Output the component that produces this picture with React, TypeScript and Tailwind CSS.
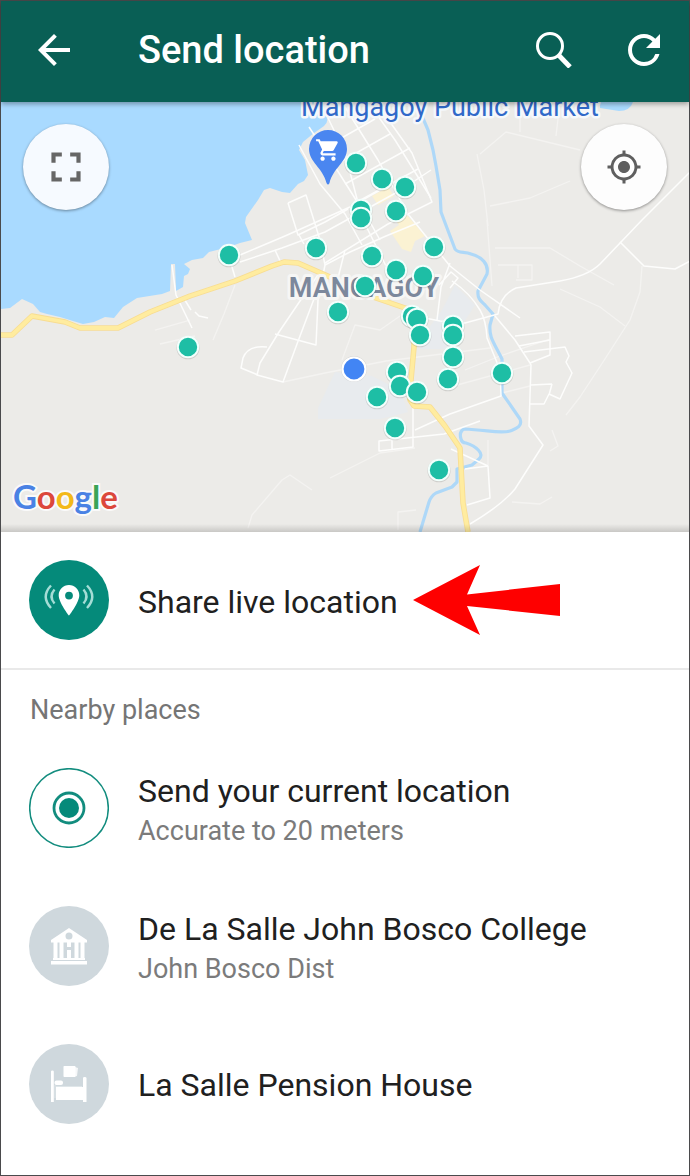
import React from 'react';
import {
  MdArrowBack,
  MdFullscreen,
  MdGpsFixed,
  MdRefresh,
  MdShoppingCart,
} from 'react-icons/md';

interface Place {
  title: string;
  subtitle?: string;
  icon: React.ReactNode;
}

interface PlaceRowProps {
  place: Place;
}

const PLACE_DOTS: [number, number][] = [
  [356, 163],
  [382, 179],
  [405, 187],
  [361, 210],
  [361, 218],
  [396, 211],
  [434, 247],
  [316, 248],
  [229, 255],
  [372, 256],
  [396, 270],
  [423, 276],
  [365, 286],
  [338, 312],
  [412, 316],
  [417, 319],
  [420, 335],
  [453, 326],
  [453, 335],
  [453, 357],
  [448, 379],
  [502, 373],
  [188, 347],
  [397, 372],
  [400, 386],
  [417, 392],
  [377, 397],
  [395, 428],
  [439, 470],
];

const WATER =
  'M0 102H318L325 114Q330 121 324 126Q312 134 303 142L299 150L305 160L308 175L304 181L298 184L290 193L282 192L270 188L264 190L258 200L246 217L245 223L252 240L240 243L229 247L209 252L203 258L192 260L184 264L190 269L188 274L184 276L183 287L176 291L175 264L171 264L170 291L162 294L137 298L123 307L114 318L105 317L94 322L83 324L73 321L60 317L47 314L40 312L33 304L22 299L10 308L0 309Z';

const MAIN_ROAD =
  'M0 335H12L32 316L65 322L80 328H118L150 312L190 296L235 281L272 266L284 262L298 263L330 277L373 297L408 309L414 325L414 347L411 380L410 400L414 406L430 407L445 426L460 448L463 503L468 532';

const RIVER =
  'M424 102L422 116L428 130L433 150L436 166L440 190L441 212L447 228L455 249C458 254 465 251 471 254C482 257 489 264 487 274L478 291C477 299 482 302 485 305L493 314L490 325C489 337 493 341 502 359V393L520 419C523 427 515 429 510 431C500 434 488 430 464 429C458 432 460 443 466 443C476 446 485 454 479 459L472 465L457 469V482L452 487L436 493Q431 496 429 502L420 532';

const ROADS = [
  'M690 172L642 220L600 264Q588 276 560 281L516 288Q500 295 498 314L465 323L440 321L415 316',
  'M620 242L644 266L675 269L690 261',
  'M452 281Q470 293 480 310Q486 320 487 338L500 370L501 396L450 414L415 430',
  'M495 316L515 340L530 363L531 365L529 426L543 445L515 489Q502 505 470 524',
  'M515 336L550 332V355L530 363M519 346L550 340M524 352L565 347L569 356L566 362L572 373L560 399L549 394L544 404L530 404M552 384L549 395M531 385L552 384',
  'M465 469L488 466L490 498L467 505M451 449L488 466',
  'M328 118L345 153L362 218L388 270M299 145L320 184L345 214L362 245',
  'M309 127L332 162L370 222L380 240M345 107L378 160L408 214L450 266L480 290L520 318',
  'M368 102L395 140L431 198',
  'M390 122L412 153L432 202L388 224L325 263',
  'M240 255L285 236L350 207L405 176M240 262L282 248L325 232L401 190L431 170',
  'M288 203L306 195L316 227L320 240L325 265L318 300L316 345L275 334',
  'M288 203L298 235L325 222L348 209M275 250L281 263M299 235L304 244',
  'M324 148L375 119M333 166L390 134M345 184L410 148M357 202L418 169',
  'M320 272L300 301L279 332L260 363L257 375L283 382L297 344L320 283',
  'M267 347Q248 345 243 358L241 368L258 375',
  'M345 250L338 278M325 265L350 252L386 236L420 222',
  'M450 263L441 287L437 320M439 285L451 272L458 278L450 288',
  'M172 265L176 295L192 328M183 297L191 310M195 312L199 316L208 318',
  'M229 257L235 277',
  'M413 406V447L379 451V441L444 434L480 421M392 440V450',
];

const MINOR_ROADS = [
  'M480 154L506 132L580 150M477 154L484 190L488 226M490 206L530 198L570 181',
  'M487 220L492 286M495 248H550L580 266L614 285M498 265H532V280H516M518 265V278',
  'M560 289L600 307L625 326M642 266L640 292L630 320L603 362L580 397L566 415',
  'M283 382L325 373L386 361L490 348M342 360L355 325L380 330L400 316',
  'M465 370L500 356L550 339M450 387L530 365M502 393L530 386',
  'M415 448L380 453L352 467L330 478M312 490L290 475L282 480L252 515L248 528',
  'M552 430L558 446L550 451M488 440V465M398 530V512L416 510',
  'M155 330L190 320M160 344L195 336M213 340L224 314L235 285',
  'M520 102V132M560 102L556 136',
  'M512 502L540 504L552 497',
];

const PLACES: Place[] = [
  {
    title: 'Send your current location',
    subtitle: 'Accurate to 20 meters',
    icon: <CurrentLocationIcon />,
  },
  {
    title: 'De La Salle John Bosco College',
    subtitle: 'John Bosco Dist',
    icon: <CollegeIcon />,
  },
  {
    title: 'La Salle Pension House',
    icon: <BedIcon />,
  },
];

function SearchIcon() {
  return (
    <svg
      className="size-9"
      viewBox="0 0 36 36"
      fill="none"
      stroke="currentColor"
      aria-hidden="true"
    >
      <circle cx="14" cy="14" r="12.5" strokeWidth="3" />
      <path d="M23 23.5L34 35" strokeWidth="4.8" />
    </svg>
  );
}

function LiveLocationIcon() {
  return (
    <svg className="size-20 shrink-0" viewBox="0 0 80 80" aria-hidden="true">
      <circle cx="40" cy="40" r="40" fill="#058a7a" />
      <path
        fill="#fff"
        fillRule="evenodd"
        d="M40 25C34.3 25 29.7 29.5 29.7 35.2C29.7 42.5 40 55.6 40 55.6S50.3 42.5 50.3 35.2C50.3 29.5 45.7 25 40 25ZM40 31.7A3.9 3.9 0 1 1 40 39.5A3.9 3.9 0 0 1 40 31.7Z"
      />
      <g fill="none" stroke="#a5ddd6" strokeWidth="2.4">
        <path d="M25.5 29.5Q19.5 36.5 25.5 43.5M22 25.5Q11.5 36.5 22 48" />
        <path d="M54.5 29.5Q60.5 36.5 54.5 43.5M58 25.5Q68.5 36.5 58 48" />
      </g>
    </svg>
  );
}

function CurrentLocationIcon() {
  return (
    <svg
      className="size-20 shrink-0"
      viewBox="0 0 80 80"
      fill="none"
      stroke="#128c7e"
      aria-hidden="true"
    >
      <circle cx="40" cy="40" r="39.3" strokeWidth="1.5" />
      <circle cx="40" cy="40" r="15" strokeWidth="2.8" />
      <circle cx="40" cy="40" r="10" fill="#058a7a" stroke="none" />
    </svg>
  );
}

function CollegeIcon() {
  return (
    <svg className="size-20 shrink-0" viewBox="0 0 80 80" aria-hidden="true">
      <circle cx="40" cy="40" r="40" fill="#cfd8dd" />
      <g fill="#fff">
        <path
          fillRule="evenodd"
          d="M40 22L58 34V36.5H22V34ZM40 26.5A3.5 3.5 0 1 0 40 33.5A3.5 3.5 0 1 0 40 26.5Z"
        />
        <path d="M24.5 36H28.5V53H24.5ZM30.5 36H34.5V53H30.5ZM45.5 36H49.5V53H45.5ZM51.5 36H55.5V53H51.5Z" />
        <path d="M38 36H42V41H38ZM38 44H42V53H38ZM24 52H56V54H24ZM22 55H58V58.5H22Z" />
      </g>
    </svg>
  );
}

function BedIcon() {
  return (
    <svg className="size-20 shrink-0" viewBox="0 0 80 80" aria-hidden="true">
      <circle cx="40" cy="40" r="40" fill="#cfd8dd" />
      <g fill="#fff">
        <path d="M22 27.5Q22 26.5 23.4 26.5T24.8 27.5V56H27V43H54V34Q54 33 55.7 33T57.5 34V58H54V56H24.8V58H22Z" />
        <rect x="25.5" y="36.5" width="8.5" height="4.5" rx="2" />
        <rect x="34.5" y="22" width="12" height="11" rx="0.8" />
        <path d="M46 23L49 24L48 32L44 33Z" opacity="0.8" />
      </g>
      <path d="M27 42.5H53M26 41V54" stroke="#dfe6e9" strokeWidth="1" />
    </svg>
  );
}

function MapCanvas() {
  return (
    <svg
      className="block size-full"
      viewBox="1 102 688 430"
      preserveAspectRatio="xMidYMid slice"
      role="img"
      aria-label="Map of Mangagoy"
    >
      <rect x="0" y="102" width="690" height="430" fill="#ecebe8" />
      <path d="M600 102H633Q630 111 619 111L600 108Z" fill="#a9daff" />
      <path
        d="M335 372L318 408V419H380L408 412L400 390L372 376ZM455 285L442 310L420 340V349H447L475 305Z"
        fill="#e8ebee"
      />
      <path
        d="M372 196L388 187L394 196L378 205ZM390 231L399 225L396 221L407 215L425 236L415 241L411 252L402 249Z"
        fill="#fbf2d3"
      />
      <path d={WATER} fill="#a9daff" />

      <g fill="none" strokeLinejoin="round">
        <g stroke="#f4f3f1" strokeWidth="1.3">
          {MINOR_ROADS.map((d) => (
            <path key={d} d={d} />
          ))}
        </g>
        <path d={RIVER} stroke="#aed8f8" strokeWidth="3.2" />
        <g stroke="#fdfdfc" strokeWidth="1.5">
          {ROADS.map((d) => (
            <path key={d} d={d} />
          ))}
        </g>
        <path d={MAIN_ROAD} stroke="#f8dd92" strokeWidth="5.5" />
        <path d={MAIN_ROAD} stroke="#ffec9f" strokeWidth="3.8" />
      </g>

      <g
        fontFamily="Roboto, sans-serif"
        textAnchor="middle"
        paintOrder="stroke"
        strokeLinejoin="round"
      >
        <text
          x="450"
          y="116"
          fontSize="27"
          fill="#3069c9"
          stroke="#f5f8fb"
          strokeWidth="5"
        >
          Mangagoy Public Market
        </text>
        <text
          x="364"
          y="297"
          fontSize="27"
          fontWeight="600"
          fill="#7c889c"
          stroke="#f6f6f5"
          strokeWidth="6"
        >
          MANGAGOY
        </text>
      </g>

      <path
        d="M328 130A19 19 0 0 1 347 149C347 162 333 168 329.5 183Q328 186 326.5 183C323 168 309 162 309 149A19 19 0 0 1 328 130Z"
        fill="#4a86f0"
      />
      <MdShoppingCart x="315" y="137" size={26} color="#fff" />

      {PLACE_DOTS.map(([x, y]) => (
        <g key={`${x}-${y}`}>
          <circle cx={x} cy={y + 0.7} r="11.6" fill="#000" opacity="0.12" />
          <circle
            cx={x}
            cy={y}
            r="10.2"
            fill="#1ebea5"
            stroke="#f2fffc"
            strokeWidth="2"
          />
        </g>
      ))}
      <circle cx="354" cy="369" r="13" fill="#000" opacity="0.1" />
      <circle
        cx="354"
        cy="369"
        r="11.5"
        fill="#4285f4"
        stroke="#fff"
        strokeWidth="2.2"
      />
    </svg>
  );
}

function GoogleLogo() {
  return (
    <div className="absolute bottom-4 left-3 font-['Lato',sans-serif] text-[33px] leading-10 font-bold [paint-order:stroke] [-webkit-text-stroke:4px_#fafafa]">
      <span className="text-[#4a82e4]">G</span>
      <span className="text-[#dc483c]">o</span>
      <span className="text-[#f3b91a]">o</span>
      <span className="text-[#4a82e4]">g</span>
      <span className="text-[#3aa456]">l</span>
      <span className="text-[#dc483c]">e</span>
    </div>
  );
}

function PlaceRow({ place }: Readonly<PlaceRowProps>) {
  return (
    <li>
      <button
        type="button"
        className="flex w-full items-center gap-[29px] px-7 py-[29px] text-left"
      >
        {place.icon}
        <span className="flex min-w-0 flex-col gap-1 pt-0.5">
          <span className="text-[32px] leading-10 text-[#202020]">
            {place.title}
          </span>
          {place.subtitle && (
            <span className="text-[27px] leading-8 text-[#7b7b7b]">
              {place.subtitle}
            </span>
          )}
        </span>
      </button>
    </li>
  );
}

export default function App() {
  return (
    <div className="flex min-h-screen flex-col border border-[#4a4a4c] bg-white font-['Roboto',sans-serif]">
      <header className="relative z-10 flex h-[101px] items-center bg-[#095f55] pr-[21px] pb-1 pl-[29px] text-white shadow-[0_2px_5px_rgba(0,0,0,0.35)]">
        <button type="button" aria-label="Back">
          <MdArrowBack className="size-12" />
        </button>
        <h1 className="ml-[60px] flex-1 text-[38px] leading-10 font-medium">
          Send location
        </h1>
        <button type="button" aria-label="Search" className="mr-12">
          <SearchIcon />
        </button>
        <button type="button" aria-label="Refresh">
          <MdRefresh className="size-12" />
        </button>
      </header>

      <main>
        <section className="relative h-[430px] overflow-hidden">
          <MapCanvas />
          <button
            type="button"
            aria-label="Expand map"
            className="absolute top-[22px] left-[22px] flex size-[86px] items-center justify-center rounded-full bg-[#f6faff] text-[#666] shadow-[0_1px_3px_rgba(0,0,0,0.4)]"
          >
            <MdFullscreen className="size-[50px]" />
          </button>
          <button
            type="button"
            aria-label="My location"
            className="absolute top-[22px] right-[22px] flex size-[86px] items-center justify-center rounded-full bg-[#fdfdfd] text-[#5f5f5f] shadow-[0_1px_3px_rgba(0,0,0,0.4)]"
          >
            <MdGpsFixed className="size-9" />
          </button>
          <GoogleLogo />
          <div className="absolute inset-x-0 bottom-0 h-2 bg-linear-to-b from-transparent to-black/15" />
        </section>

        <button
          type="button"
          className="flex w-full items-center gap-[29px] border-b-2 border-[#e9e9e9] px-7 py-7 text-left"
        >
          <LiveLocationIcon />
          <span className="pt-1 text-[32px] leading-10 text-[#202020]">
            Share live location
          </span>
          <svg
            className="-ml-3.5 h-[70px] w-[147px] shrink-0"
            viewBox="0 0 147 70"
            fill="#fe0000"
            aria-hidden="true"
          >
            <path d="M0 35L67 0L54 29.5L147 19V51L54 41L67 70Z" />
          </svg>
        </button>

        <section>
          <h2 className="px-[29px] pt-6 pb-[13px] text-[27px] leading-8 text-[#757575]">
            Nearby places
          </h2>
          <ul>
            {PLACES.map((place) => (
              <PlaceRow key={place.title} place={place} />
            ))}
          </ul>
        </section>
      </main>
    </div>
  );
}
